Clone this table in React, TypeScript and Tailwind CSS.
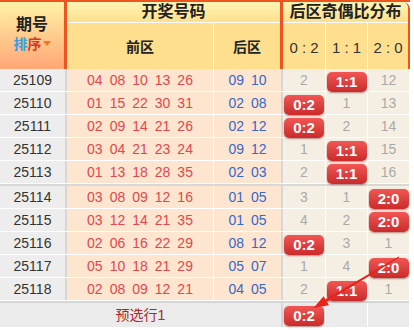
import type { ReactNode } from "react";

type Ratio = "0:2" | "1:1" | "2:0";

interface Draw {
  issue: string;
  front: string[];
  back: string[];
  hit: Ratio;
  miss: [string, string, string];
}

const RATIOS: Ratio[] = ["0:2", "1:1", "2:0"];

const draws: Draw[] = [
  { issue: "25109", front: ["04", "08", "10", "13", "26"], back: ["09", "10"], hit: "1:1", miss: ["2", "", "12"] },
  { issue: "25110", front: ["01", "15", "22", "30", "31"], back: ["02", "08"], hit: "0:2", miss: ["", "1", "13"] },
  { issue: "25111", front: ["02", "09", "14", "21", "26"], back: ["02", "12"], hit: "0:2", miss: ["", "2", "14"] },
  { issue: "25112", front: ["03", "04", "21", "23", "24"], back: ["09", "12"], hit: "1:1", miss: ["1", "", "15"] },
  { issue: "25113", front: ["01", "13", "18", "28", "35"], back: ["02", "03"], hit: "1:1", miss: ["2", "", "16"] },
  { issue: "25114", front: ["03", "08", "09", "12", "16"], back: ["01", "05"], hit: "2:0", miss: ["3", "1", ""] },
  { issue: "25115", front: ["03", "12", "14", "21", "35"], back: ["01", "05"], hit: "2:0", miss: ["4", "2", ""] },
  { issue: "25116", front: ["02", "06", "16", "22", "29"], back: ["08", "12"], hit: "0:2", miss: ["", "3", "1"] },
  { issue: "25117", front: ["05", "10", "18", "21", "29"], back: ["05", "07"], hit: "2:0", miss: ["1", "4", ""] },
  { issue: "25118", front: ["02", "08", "09", "12", "21"], back: ["04", "05"], hit: "1:1", miss: ["2", "", "1"] },
];

// widths of the three ratio columns, white divider included
const ratioCol = ["w-[43px] border-r border-white", "w-[42px] border-r border-white", "w-[41px]"];

function Badge({ label }: { label: string }) {
  return (
    <span className="relative z-10 mt-[3px] flex h-[20px] w-[40px] items-center justify-center rounded-[5px] bg-linear-to-b from-[#f25654] to-[#c92b2a] text-[15px] font-bold text-white shadow-[0_1px_2px_rgba(110,0,0,0.45)]">
      {label}
    </span>
  );
}

function Nums({ list, color }: { list: string[]; color: string }) {
  return (
    <div className={`flex items-center gap-[7px] ${color}`}>
      {list.map((n, i) => (
        <span key={i}>{n}</span>
      ))}
    </div>
  );
}

function RatioCells({ draw, bg }: { draw?: Draw; bg: string }) {
  return (
    <>
      {RATIOS.map((r, i) => (
        <div key={r} className={`flex justify-center ${bg} ${ratioCol[i]}`}>
          {draw && draw.hit === r ? (
            <Badge label={r} />
          ) : (
            <span className="self-center text-[#a9a9a9]">{draw ? draw.miss[i] : ""}</span>
          )}
        </div>
      ))}
    </>
  );
}

function Row({ draw }: { draw: Draw }) {
  return (
    <div className="flex h-[23px] border-b border-white text-[14px]">
      <div className="flex w-[67px] items-center justify-center border-r-2 border-[#d6d6d6] bg-[#ededed] text-[#333]">
        {draw.issue}
      </div>
      <div className="flex w-[147px] items-center justify-center border-r border-white bg-[#fde5d0]">
        <Nums list={draw.front} color="text-[#e2474c]" />
      </div>
      <div className="flex w-[69px] items-center justify-center border-r-2 border-[#d6d6d6] bg-[#fde5d0]">
        <Nums list={draw.back} color="text-[#3868c8]" />
      </div>
      <RatioCells draw={draw} bg="bg-[#f5efe3]" />
    </div>
  );
}

function HeadCell({ className, children }: { className: string; children: ReactNode }) {
  return <div className={`flex items-center justify-center ${className}`}>{children}</div>;
}

function Header() {
  return (
    <div className="flex h-[69px] border-t-2 border-[#ee5420] text-[#222]">
      <div className="flex w-[67px] flex-col items-center justify-center border-r-[3px] border-[#ee5420] bg-linear-to-b from-[#fff2a6] to-[#ffa675] pb-[4px]">
        <span className="text-[16px] font-bold leading-[20px]">期号</span>
        <span className="flex items-center text-[14px] font-bold leading-[18px]">
          <span className="text-[#3a9be6]">排</span>
          <span className="text-[#d7362c]">序</span>
          <svg width="8" height="6" viewBox="0 0 8 6" className="ml-[1px]">
            <path d="M0 0h8L4 5z" fill="#f7731c" />
          </svg>
        </span>
      </div>

      <div className="flex w-[216px] flex-col border-r-[3px] border-[#ee5420]">
        <HeadCell className="h-[21px] border-b border-white bg-linear-to-b from-[#fff4b3] to-[#fde08c] text-[16px] font-bold">
          开奖号码
        </HeadCell>
        <div className="flex flex-1 bg-[#fddf8d] text-[14px] font-bold">
          <HeadCell className="w-[147px] border-r border-white pt-[2px]">前区</HeadCell>
          <HeadCell className="flex-1 pt-[2px]">后区</HeadCell>
        </div>
      </div>

      <div className="flex w-[127px] flex-col overflow-hidden rounded-tr-[7px] border-r-2 border-[#ee5420]">
        <HeadCell className="h-[21px] border-b border-white bg-linear-to-b from-[#fff4b3] to-[#fde08c] text-[16px] font-bold">
          后区奇偶比分布
        </HeadCell>
        <div className="flex flex-1 bg-[#fddf8d] text-[15px] text-[#333]">
          <HeadCell className="w-[43px] border-r border-white pt-[4px]">0 : 2</HeadCell>
          <HeadCell className="w-[42px] border-r border-white pt-[4px]">1 : 1</HeadCell>
          <HeadCell className="flex-1 pt-[4px]">2 : 0</HeadCell>
        </div>
      </div>
    </div>
  );
}

export default function App() {
  return (
    <div className="relative h-[330px] w-[414px] bg-white font-['Liberation_Sans','Noto_Sans_CJK_SC',sans-serif]">
      <div className="w-[410px]">
        <Header />
        {draws.slice(0, 5).map((d) => (
          <Row key={d.issue} draw={d} />
        ))}
        <div className="h-[2px] w-[409px] bg-[#d8d8d8]" />
        {draws.slice(5).map((d) => (
          <Row key={d.issue} draw={d} />
        ))}
        <div className="h-[2px] w-[409px] bg-[#d6d6d6]" />
        <div className="flex h-[24px] text-[14px]">
          <div className="flex w-[283px] items-center justify-center border-r-2 border-[#d6d6d6] bg-[#ebebeb] text-[#a8292b]">
            预选行1
          </div>
          <div className="flex w-[43px] justify-center border-r border-white bg-[#ebebeb]">
            <Badge label="0:2" />
          </div>
          <div className="w-[42px] border-r border-white bg-[#ebebeb]" />
          <div className="w-[41px] bg-[#ebebeb]" />
        </div>
      </div>

      {/* annotation arrow pointing at the predicted row */}
      <svg className="pointer-events-none absolute inset-0 z-20" width="414" height="330">
        <polygon points="399.3,257.4 398.7,256.6 325.2,299.5 326.8,302.1" fill="#e8231b" />
        <polygon points="313.5,308 329,305.3 323.6,296.3" fill="#e8231b" />
      </svg>
    </div>
  );
}
